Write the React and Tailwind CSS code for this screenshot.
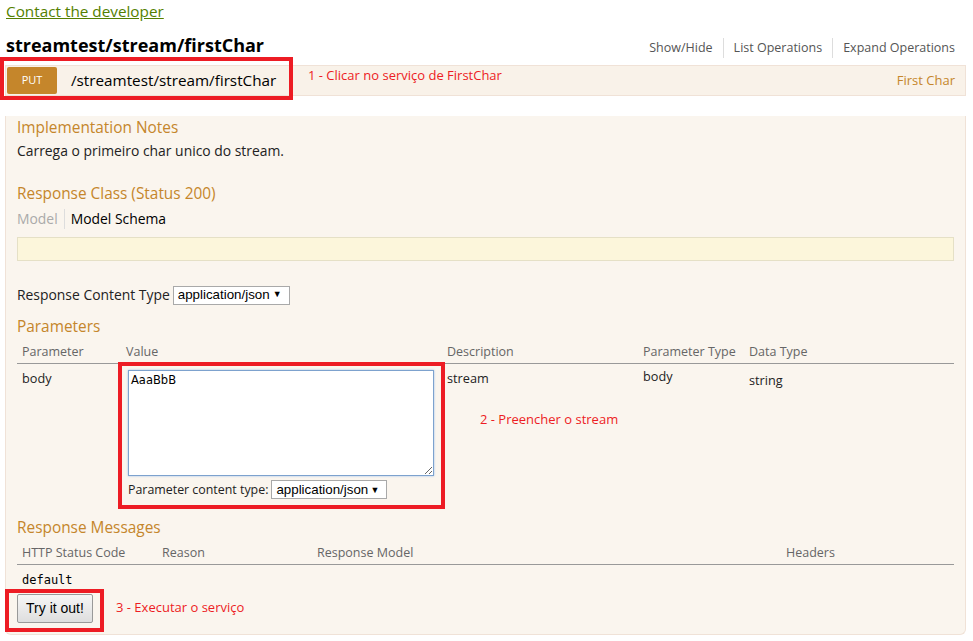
import React from "react";

const Select = ({ width }) => (
  <div className={`flex h-[19px] items-center justify-between border border-[#a9a9a9] bg-white pl-[4px] pr-[7px] font-['Liberation_Sans',sans-serif] text-[13.33px] text-black ${width}`}>
    <span>application/json</span>
    <span className="text-[9px]">▼</span>
  </div>
);

const Annotation = ({ className, children }) => (
  <div className={`absolute text-[13px] leading-[18px] text-[#ed1c24] ${className}`}>{children}</div>
);

export default function App() {
  return (
    <div className="relative h-[641px] w-[973px] overflow-hidden bg-white font-['Open_Sans',sans-serif] text-[#222]">
      {/* top */}
      <div className="flex h-[22px] items-center pl-[6px]">
        <a className="text-[15.3px] leading-[20px] text-[#547f00] underline">Contact the developer</a>
      </div>
      <div className="flex items-end justify-between pl-[6px] pr-[18px] pt-[11px] pb-[8px]">
        <h2 className="text-[18px] font-bold leading-[24px] text-black">streamtest/stream/firstChar</h2>
        <ul className="relative top-[1px] flex text-[12.5px] leading-[20px] text-[#555]">
          <li className="border-r border-[#ddd] pr-[10px]">Show/Hide</li>
          <li className="border-r border-[#ddd] px-[10px]">List Operations</li>
          <li className="pl-[10px]">Expand Operations</li>
        </ul>
      </div>

      {/* operation */}
      <div className="ml-[5px] w-[961px]">
        <div className="flex h-[31px] items-center border border-[#f0e2d7] bg-[#f9f2e9]">
          <span className="ml-[1px] flex h-[27px] w-[50px] items-center justify-center rounded-[2px] bg-[#c5862b] text-[11px] text-white">PUT</span>
          <span className="ml-[14px] text-[15.25px] text-black">/streamtest/stream/firstChar</span>
          <span className="ml-auto mr-[10px] text-[13px] text-[#c5862b]">First Char</span>
        </div>
        <div className="rounded-b-[6px] border border-t-0 border-[#f0e2d7] bg-[#faf5ee] px-[11px] pb-[11px] text-[13.9px]">
          <h4 className="mt-[20px] pt-[1px] text-[15.4px] leading-[22px] text-[#c5862b]">Implementation Notes</h4>
          <p className="mt-[2px] leading-[20px]">Carrega o primeiro char unico do stream.</p>
          <h4 className="mt-[21px] pt-[1px] text-[15.4px] leading-[22px] text-[#c5862b]">Response Class (Status 200)</h4>
          <div className="mt-[4px] flex leading-[20px]">
            <span className="border-r border-[#ddd] pr-[6px] text-[#aaa]">Model</span>
            <span className="pl-[6px] text-black">Model Schema</span>
          </div>
          <div className="mt-[8px] h-[24px] border border-[#e5e0c6] bg-[#fcf6db]" />

          <div className="mt-[24px] flex h-[20px] items-center gap-[3px]">
            <span>Response Content Type</span>
            <Select width="w-[117px]" />
          </div>

          <h4 className="mt-[10px] pt-[1px] text-[15.4px] leading-[22px] text-[#c5862b]">Parameters</h4>
          <div className="mt-[3px] grid grid-cols-[104px_321px_196px_106px_1fr] border-b border-[#999] text-[12.5px] leading-[22px] text-[#666]">
            <div className="pl-[5px]">Parameter</div>
            <div className="pl-[5px]">Value</div>
            <div className="pl-[5px]">Description</div>
            <div className="pl-[5px]">Parameter Type</div>
            <div className="pl-[5px]">Data Type</div>
          </div>
          <div className="grid grid-cols-[104px_321px_196px_106px_1fr] text-[12.7px] leading-[20px]">
            <div className="pl-[5px] pt-[4px]">body</div>
            <div className="pl-[7px] pt-[6px]">
              <textarea
                readOnly
                defaultValue="AaaBbB"
                className="block h-[106px] w-[306px] border border-[#7da2ce] bg-white px-[2px] py-[1px] font-['DejaVu_Sans',sans-serif] text-[11.5px] leading-[16px] text-black shadow-[0_0_2px_#9ec2ee] outline-none"
              />
              <div className="mt-[4px] flex h-[19px] items-center gap-[3px] text-[12.4px]">
                <span>Parameter content type:</span>
                <Select width="w-[116px]" />
              </div>
            </div>
            <div className="pl-[5px] pt-[4px]">stream</div>
            <div className="pl-[5px] pt-[2px]">body</div>
            <div className="pl-[5px] pt-[6px]">string</div>
          </div>

          <h4 className="mt-[17px] pt-[1px] text-[15.4px] leading-[22px] text-[#c5862b]">Response Messages</h4>
          <div className="mt-[3px] grid grid-cols-[140px_155px_469px_1fr] border-b border-[#999] text-[12.5px] leading-[22px] text-[#666]">
            <div className="pl-[5px]">HTTP Status Code</div>
            <div className="pl-[5px]">Reason</div>
            <div className="pl-[5px]">Response Model</div>
            <div className="pl-[5px]">Headers</div>
          </div>
          <div className="pl-[5px] pt-[5px] font-['DejaVu_Sans_Mono',monospace] text-[12px] leading-[20px] text-black">default</div>
          <button className="mt-[4px] h-[29px] w-[76px] rounded-[2px] border border-[#999] bg-gradient-to-b from-[#f6f6f6] to-[#dedede] font-['Liberation_Sans',sans-serif] text-[14px] text-black">
            Try it out!
          </button>
        </div>
      </div>

      {/* annotations */}
      <div className="absolute left-0 top-[57px] h-[43px] w-[293px] border-4 border-[#ed1c24]" />
      <div className="absolute left-[118px] top-[362px] h-[147px] w-[327px] border-4 border-[#ed1c24]" />
      <div className="absolute left-[5px] top-[589px] h-[43px] w-[99px] border-4 border-[#ed1c24]" />
      <Annotation className="left-[308px] top-[66px]">1 - Clicar no serviço de FirstChar</Annotation>
      <Annotation className="left-[480px] top-[410px]">2 - Preencher o stream</Annotation>
      <Annotation className="left-[116px] top-[598px]">3 - Executar o serviço</Annotation>
    </div>
  );
}
